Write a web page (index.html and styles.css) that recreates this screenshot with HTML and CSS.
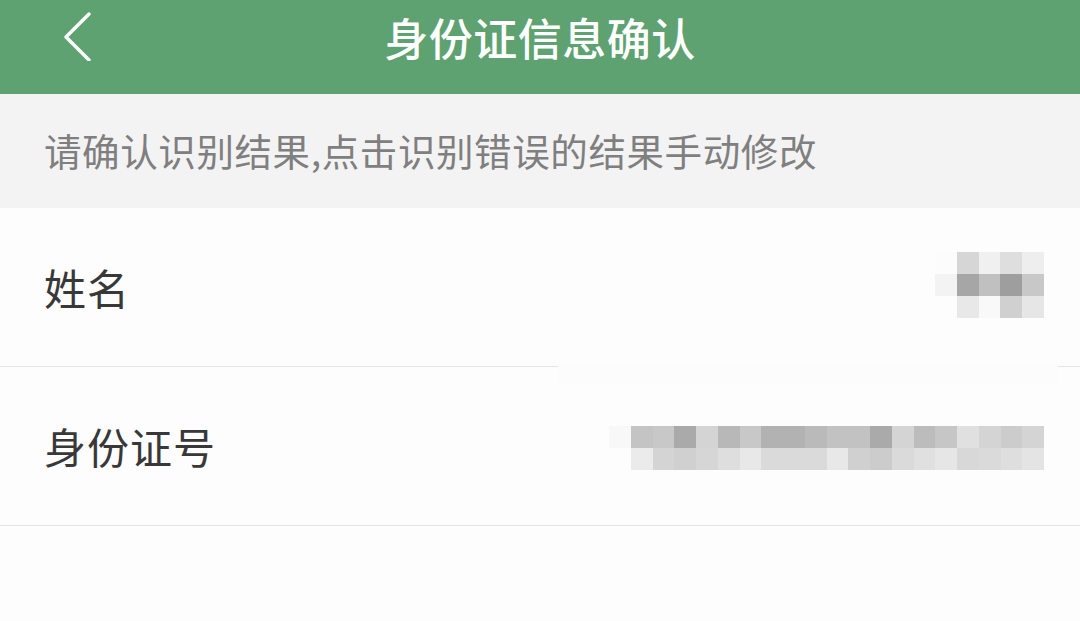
FILE: index.html
```html
<!DOCTYPE html>
<html lang="zh-CN">
<head>
<meta charset="utf-8">
<title>身份证信息确认</title>
<link rel="stylesheet" href="styles.css">
</head>
<body>
<div class="app">
  <header class="topbar">
    <button class="back" aria-label="返回">
      <svg width="30" height="50" viewBox="0 0 30 50"><polyline points="26,3 3,26 26,49" fill="none" stroke="#fff" stroke-width="3.4" stroke-linecap="round" stroke-linejoin="round"/></svg>
    </button>
    <h1 class="title">身份证信息确认</h1>
  </header>
  <div class="hint">请确认识别结果,点击识别错误的结果手动修改</div>
  <div class="list">
    <div class="row">
      <span class="label">姓名</span>
      <div class="mosaic mosaic-name">
        <i style="background:#fcfcfc"></i><i style="background:#d6d6d6"></i><i style="background:#f0f0f0"></i><i style="background:#dedede"></i><i style="background:#eeeeee"></i>
        <i style="background:#f3f3f3"></i><i style="background:#a6a6a6"></i><i style="background:#c0c0c0"></i><i style="background:#9e9e9e"></i><i style="background:#c8c8c8"></i>
        <i style="background:#fdfdfd"></i><i style="background:#e8e8e8"></i><i style="background:#f9f9f9"></i><i style="background:#d0d0d0"></i><i style="background:#e6e6e6"></i>
      </div>
    </div>
    <div class="row">
      <span class="label">身份证号</span>
      <div class="mosaic mosaic-id">
        <i style="background:#f8f8f8"></i><i style="background:#c4c4c4"></i><i style="background:#c8c8c8"></i><i style="background:#aaaaaa"></i><i style="background:#d4d4d4"></i><i style="background:#b8b8b8"></i><i style="background:#c8c8c8"></i><i style="background:#b2b2b2"></i><i style="background:#b2b2b2"></i><i style="background:#bababa"></i><i style="background:#c2c2c2"></i><i style="background:#c2c2c2"></i><i style="background:#aaaaaa"></i><i style="background:#d4d4d4"></i><i style="background:#bcbcbc"></i><i style="background:#c6c6c6"></i><i style="background:#e0e0e0"></i><i style="background:#d4d4d4"></i><i style="background:#cccccc"></i><i style="background:#d4d4d4"></i>
        <i style="background:#fdfdfd"></i><i style="background:#ebebeb"></i><i style="background:#d4d4d4"></i><i style="background:#d0d0d0"></i><i style="background:#d6d6d6"></i><i style="background:#dedede"></i><i style="background:#e8e8e8"></i><i style="background:#dadada"></i><i style="background:#dadada"></i><i style="background:#dadada"></i><i style="background:#e8e8e8"></i><i style="background:#d0d0d0"></i><i style="background:#cccccc"></i><i style="background:#dadada"></i><i style="background:#e0e0e0"></i><i style="background:#e6e6e6"></i><i style="background:#d8d8d8"></i><i style="background:#dadada"></i><i style="background:#dedede"></i><i style="background:#e4e4e4"></i>
      </div>
    </div>
    <div class="smudge"></div>
  </div>
</div>
</body>
</html>
```

FILE: styles.css
```css
* { box-sizing: border-box; margin: 0; padding: 0; }
html, body { width: 1080px; height: 621px; overflow: hidden; }
body {
  background: #fdfdfd;
  font-family: "Noto Sans CJK SC", "Noto Sans", sans-serif;
}
.app { display: flex; flex-direction: column; height: 621px; }
.topbar {
  height: 94px;
  background: #5ea271;
  display: flex;
  align-items: center;
  justify-content: center;
  position: relative;
}
.back {
  position: absolute;
  left: 63px;
  top: 11px;
  width: 30px;
  height: 50px;
  background: none;
  border: 0;
  display: flex;
}
.title {
  color: #ffffff;
  font-size: 44px;
  font-weight: 500;
  line-height: 1;
  margin-top: -20px;
  letter-spacing: 0.5px;
}
.hint {
  height: 114px;
  background: #f3f3f3;
  color: #7f7f7f;
  font-size: 37.5px;
  letter-spacing: 0.6px;
  padding-left: 44px;
  display: flex;
  align-items: center;
  padding-bottom: 4px;
}
.list { position: relative; }
.row {
  height: 159px;
  border-bottom: 1px solid #e4e4e4;
  display: flex;
  align-items: center;
  justify-content: space-between;
  padding: 0 36px 0 44px;
}
.label {
  color: #383838;
  font-size: 42px;
  line-height: 1;
  letter-spacing: 1px;
}
.mosaic { display: grid; }
.mosaic i { display: block; }
.mosaic-name {
  grid-template-columns: repeat(5, 21.8px);
  grid-auto-rows: 21.7px;
  margin-top: -4px;
}
.mosaic-id {
  grid-template-columns: repeat(20, 21.75px);
  grid-auto-rows: 21.7px;
  margin-top: 4px;
}
.smudge {
  position: absolute;
  left: 558px;
  top: 154px;
  width: 500px;
  height: 22px;
  background: #fcfcfc;
}
```
